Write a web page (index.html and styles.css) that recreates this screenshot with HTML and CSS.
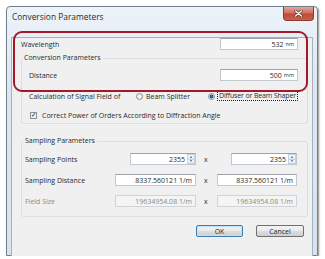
FILE: index.html
```html
<!DOCTYPE html>
<html>
  <head>
    <meta http-equiv="content-type" content="text/html; charset=UTF-8">
    <title>Conversion Parameters</title>
    <link rel="stylesheet" href="styles.css">
  </head>
  <body>
    <div class="window">
      <div class="titlebar">
        <span class="title">Conversion Parameters</span>
        <span class="closeButton">
          <svg width="9" height="7" viewBox="0 0 9 7"><path d="M1.5 1 L7.5 6 M7.5 1 L1.5 6" stroke="#5a2a24" stroke-width="2.6" stroke-linecap="round"/><path d="M1.5 1 L7.5 6 M7.5 1 L1.5 6" stroke="#ffffff" stroke-width="1.4" stroke-linecap="round"/></svg>
        </span>
      </div>
      <div class="client">
        <div class="row waveRow">
          <span class="label">Wavelength</span>
          <span class="field">532 <small>nm</small></span>
        </div>
        <fieldset class="group convGroup">
          <legend>Conversion Parameters</legend>
          <div class="row">
            <span class="label">Distance</span>
            <span class="field">500 <small>mm</small></span>
          </div>
          <div class="row calcRow">
            <span class="label calcLabel">Calculation of Signal Field of</span>
            <span class="radio"></span>
            <span class="radioText">Beam Splitter</span>
            <span class="radio checked"></span>
            <span class="radioText focused">Diffuser or Beam Shaper</span>
          </div>
          <div class="row checkRow">
            <span class="checkbox">&#10003;</span>
            <span class="label">Correct Power of Orders According to Diffraction Angle</span>
          </div>
        </fieldset>
        <fieldset class="group samplingGroup">
          <legend>Sampling Parameters</legend>
          <div class="samplingGrid">
            <span class="label">Sampling Points</span>
            <span class="field spin">2355<span class="arrows"><i class="up"></i><i class="down"></i></span></span>
            <span class="times">x</span>
            <span class="field spin">2355<span class="arrows"><i class="up"></i><i class="down"></i></span></span>

            <span class="label">Sampling Distance</span>
            <span class="field">8337.560121 1/m</span>
            <span class="times">x</span>
            <span class="field">8337.560121 1/m</span>

            <span class="label disabledLabel">Field Size</span>
            <span class="field disabled">19634954.08 1/m</span>
            <span class="times">x</span>
            <span class="field disabled">19634954.08 1/m</span>
          </div>
        </fieldset>
        <div class="buttons">
          <span class="button default">OK</span>
          <span class="button">Cancel</span>
        </div>
      </div>
      <div class="annotation"></div>
    </div>
  </body>
</html>
```

FILE: styles.css
```css
* { box-sizing: border-box; }
body {
  margin: 0;
  background-color: #ffffff;
  font-family: "Open Sans", "Noto Sans", sans-serif;
  font-size: 7px;
  color: #2a2a2a;
}
.window {
  position: relative;
  margin: 6px 0 0 6px;
  width: 312px;
  height: 250px;
  border: 1px solid #747f8c;
  border-radius: 4px 4px 0 0;
  background: linear-gradient(#edf3f9, #dde7f1 30%, #d8e3ee);
  padding: 0 5px 5px 5px;
  box-shadow: 1px 1px 2px rgba(0, 0, 0, 0.45);
}
.titlebar {
  display: flex;
  align-items: flex-start;
  justify-content: space-between;
  height: 20px;
}
.title {
  font-size: 8.4px;
  color: #2a2a2a;
  margin-top: 4px;
}
.closeButton {
  display: flex;
  align-items: center;
  justify-content: center;
  width: 31px;
  height: 14px;
  margin-right: -2px;
  border: 1px solid #8c3b33;
  border-top: none;
  border-radius: 0 0 4px 4px;
  background: linear-gradient(#e7a798, #d0705f 45%, #c24a35 55%, #c9614e);
}
.client {
  height: 223px;
  background-color: #f0f0f0;
  box-shadow: 0 0 0 1px #a3b1c2;
}
.row {
  display: flex;
  align-items: center;
  height: 12px;
}
.waveRow {
  margin-top: 11px;
  padding: 0 14px 0 9px;
  justify-content: space-between;
}
.field {
  display: flex;
  align-items: center;
  justify-content: flex-end;
  height: 12px;
  padding-right: 3px;
  background-color: #ffffff;
  border: 1px solid #c2c6ce;
  border-top-color: #9ea3ab;
  white-space: nowrap;
}
.waveRow .field, .convGroup .field { width: 78px; }
.field small { font-size: 5.5px; margin-left: 2px; }
.group {
  margin: 0 4px 0 9px;
  border: 1px solid #d5dfe5;
  border-radius: 3px;
  min-width: 0;
}
.group legend {
  line-height: 8px;
  padding: 0 2px;
}
.convGroup {
  margin-top: 4px;
  padding: 7px 9px 2px 7px;
}
.convGroup legend { margin-left: -7px; }
.convGroup .row:first-of-type { justify-content: space-between; }
.calcRow { margin-top: 9px; }
.calcLabel { width: 107px; flex-shrink: 0; }
.checkRow { margin-top: 7px; }
.radio {
  flex-shrink: 0;
  width: 7px;
  height: 7px;
  border-radius: 50%;
  border: 1px solid #8e8f8f;
  background: radial-gradient(#ffffff, #d8d8d8);
  margin: 0 2px 0 0;
}
.radio.checked {
  background: radial-gradient(#2a74c4 0, #1d4f93 1.6px, #dfe6ee 2.2px);
  margin: 0 2px 0 auto;
}
.radioText { padding: 0 1px; white-space: nowrap; }
.radioText.focused {
  border: 1px dotted #202020;
  line-height: 8px;
  letter-spacing: -0.15px;
}
.checkbox {
  display: flex;
  align-items: center;
  justify-content: center;
  width: 7px;
  height: 7px;
  border: 1px solid #8e8f8f;
  background-color: #f2f4f7;
  color: #264f9f;
  font-size: 6px;
  font-weight: bold;
  margin: 0 5px 0 1px;
}
.samplingGroup {
  margin-top: 13px;
  padding: 8px 10px 9px 3px;
}
.samplingGroup legend { margin-left: -2px; }
.samplingGrid {
  display: grid;
  grid-template-columns: 90px 81px 21px 80px;
  grid-auto-rows: 12px;
  row-gap: 9px;
  align-items: center;
}
.samplingGrid .field { height: 12px; }
.spin {
  width: 66px;
  justify-self: end;
  padding-right: 0;
}
.arrows {
  display: flex;
  flex-direction: column;
  width: 8px;
  height: 10px;
  margin-left: 2px;
}
.arrows i {
  flex: 1;
  display: flex;
  align-items: center;
  justify-content: center;
  border: 1px solid #c5d3e3;
  background: linear-gradient(#f4f8fc, #dfe9f5);
}
.arrows i.down { border-top: none; }
.arrows i::after {
  content: "";
  border-left: 1.5px solid transparent;
  border-right: 1.5px solid transparent;
}
.arrows i.up::after { border-bottom: 2px solid #4b5d78; }
.arrows i.down::after { border-top: 2px solid #4b5d78; }
.times { padding-left: 8px; }
.field.disabled {
  background-color: #f4f4f4;
  border-color: #d0d3d8;
  color: #8a8a8a;
}
.disabledLabel { color: #8a8a8a; }
.buttons {
  display: flex;
  justify-content: flex-end;
  gap: 13px;
  margin-top: 8px;
  padding-right: 8px;
}
.button {
  display: flex;
  align-items: center;
  justify-content: center;
  width: 48px;
  height: 12px;
  border: 1px solid #707070;
  border-radius: 2px;
  background: linear-gradient(#f2f2f2, #ebebeb 50%, #dddddd 51%, #cfcfcf);
}
.button.default {
  width: 47px;
  border-color: #3c7fb1;
  box-shadow: inset 0 0 0 1px #bfe1f7;
}
.annotation {
  position: absolute;
  left: 6px;
  top: 24px;
  width: 295px;
  height: 61px;
  border: 2.5px solid #a5182b;
  border-radius: 9px;
}
```
